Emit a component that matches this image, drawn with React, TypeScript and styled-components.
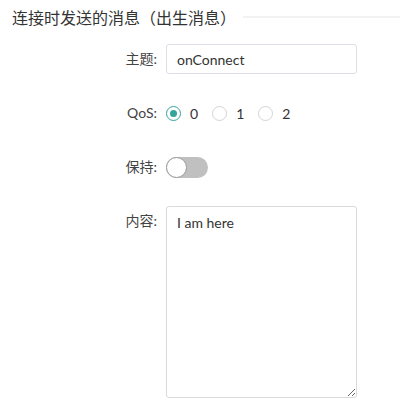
import React, { useState } from 'react'
import styled, { createGlobalStyle } from 'styled-components'

const GlobalStyle = createGlobalStyle`
  html, body {
    margin: 0;
    padding: 0;
    background: #fff;
  }
  body {
    font-family: "Lato", "Noto Sans CJK SC", sans-serif;
    color: #333;
  }
`

const qosOptions = [0, 1, 2]

const App = () => {
	const [qos, setQos] = useState(0)
	const [retain, setRetain] = useState(false)

	return (
		<>
			<GlobalStyle />
			<Page>
				<Heading>
					<Title>连接时发送的消息（出生消息）</Title>
					<Rule />
				</Heading>

				<Item>
					<Label>主题:</Label>
					<Input defaultValue="onConnect" />
				</Item>

				<Item>
					<Label>QoS:</Label>
					<RadioGroup>
						{qosOptions.map((value) => (
							<RadioOption key={value} onClick={() => setQos(value)}>
								<RadioCircle $checked={qos === value} />
								<RadioText>{value}</RadioText>
							</RadioOption>
						))}
					</RadioGroup>
				</Item>

				<Item>
					<Label>保持:</Label>
					<Switch role="switch" aria-checked={retain} $on={retain} onClick={() => setRetain(!retain)}>
						<Knob $on={retain} />
					</Switch>
				</Item>

				<Item $top>
					<Label>内容:</Label>
					<TextArea defaultValue="I am here" />
				</Item>
			</Page>
		</>
	)
}


const Page = styled.div`
  width: 400px;
  height: 406px;
  box-sizing: border-box;
  padding: 6px 0 0 12px;
  overflow: hidden;
`

const Heading = styled.div`
  display: flex;
  align-items: center;
  height: 24px;
  margin-bottom: 14px;
`

const Title = styled.div`
  font-size: 16px;
  line-height: 24px;
  color: #333;
  white-space: nowrap;
`

const Rule = styled.div`
  flex: 1;
  height: 2px;
  margin: -3px 0 0 7px;
  background: #f2f2f2;
`

const Item = styled.div<{ $top?: boolean }>`
  display: flex;
  align-items: ${(p) => (p.$top ? 'flex-start' : 'center')};
  min-height: 30px;
  margin-bottom: 24px;
`

const Label = styled.label`
  width: 154px;
  box-sizing: border-box;
  padding-right: 9px;
  text-align: right;
  font-size: 14px;
  line-height: 30px;
  color: #444;
  flex-shrink: 0;
`

const Input = styled.input`
  width: 191px;
  height: 30px;
  box-sizing: border-box;
  padding: 0 10px;
  border: 1px solid #dcdfe6;
  border-radius: 3px;
  font-family: inherit;
  font-size: 14px;
  color: #333;
  outline: none;
`

const RadioGroup = styled.div`
  display: flex;
  align-items: center;
  gap: 14px;
`

const RadioOption = styled.div`
  display: flex;
  align-items: center;
  gap: 9px;
  cursor: pointer;
`

const RadioCircle = styled.span<{ $checked: boolean }>`
  width: 15px;
  height: 15px;
  box-sizing: border-box;
  border-radius: 50%;
  border: ${(p) => (p.$checked ? '1.5px solid #35a49b' : '1px solid #d4d4d4')};
  display: flex;
  align-items: center;
  justify-content: center;

  &::after {
    content: '';
    width: 7px;
    height: 7px;
    border-radius: 50%;
    background: #35a49b;
    display: ${(p) => (p.$checked ? 'block' : 'none')};
  }
`

const RadioText = styled.span`
  font-size: 14px;
  color: #333;
`

const Switch = styled.div<{ $on: boolean }>`
  position: relative;
  width: 42px;
  height: 21px;
  border-radius: 11px;
  background: ${(p) => (p.$on ? '#35a49b' : '#c0c0c0')};
  cursor: pointer;
`

const Knob = styled.span<{ $on: boolean }>`
  position: absolute;
  top: 0;
  left: ${(p) => (p.$on ? '21px' : '0')};
  width: 21px;
  height: 21px;
  box-sizing: border-box;
  border-radius: 50%;
  background: #fff;
  border: 1.5px solid #9a9a9a;
`

const TextArea = styled.textarea`
  width: 191px;
  height: 192px;
  box-sizing: border-box;
  padding: 6px 10px;
  border: 1px solid #d9d9d9;
  border-radius: 3px;
  font-family: inherit;
  font-size: 14px;
  line-height: 20px;
  color: #333;
  outline: none;
`

export default App
